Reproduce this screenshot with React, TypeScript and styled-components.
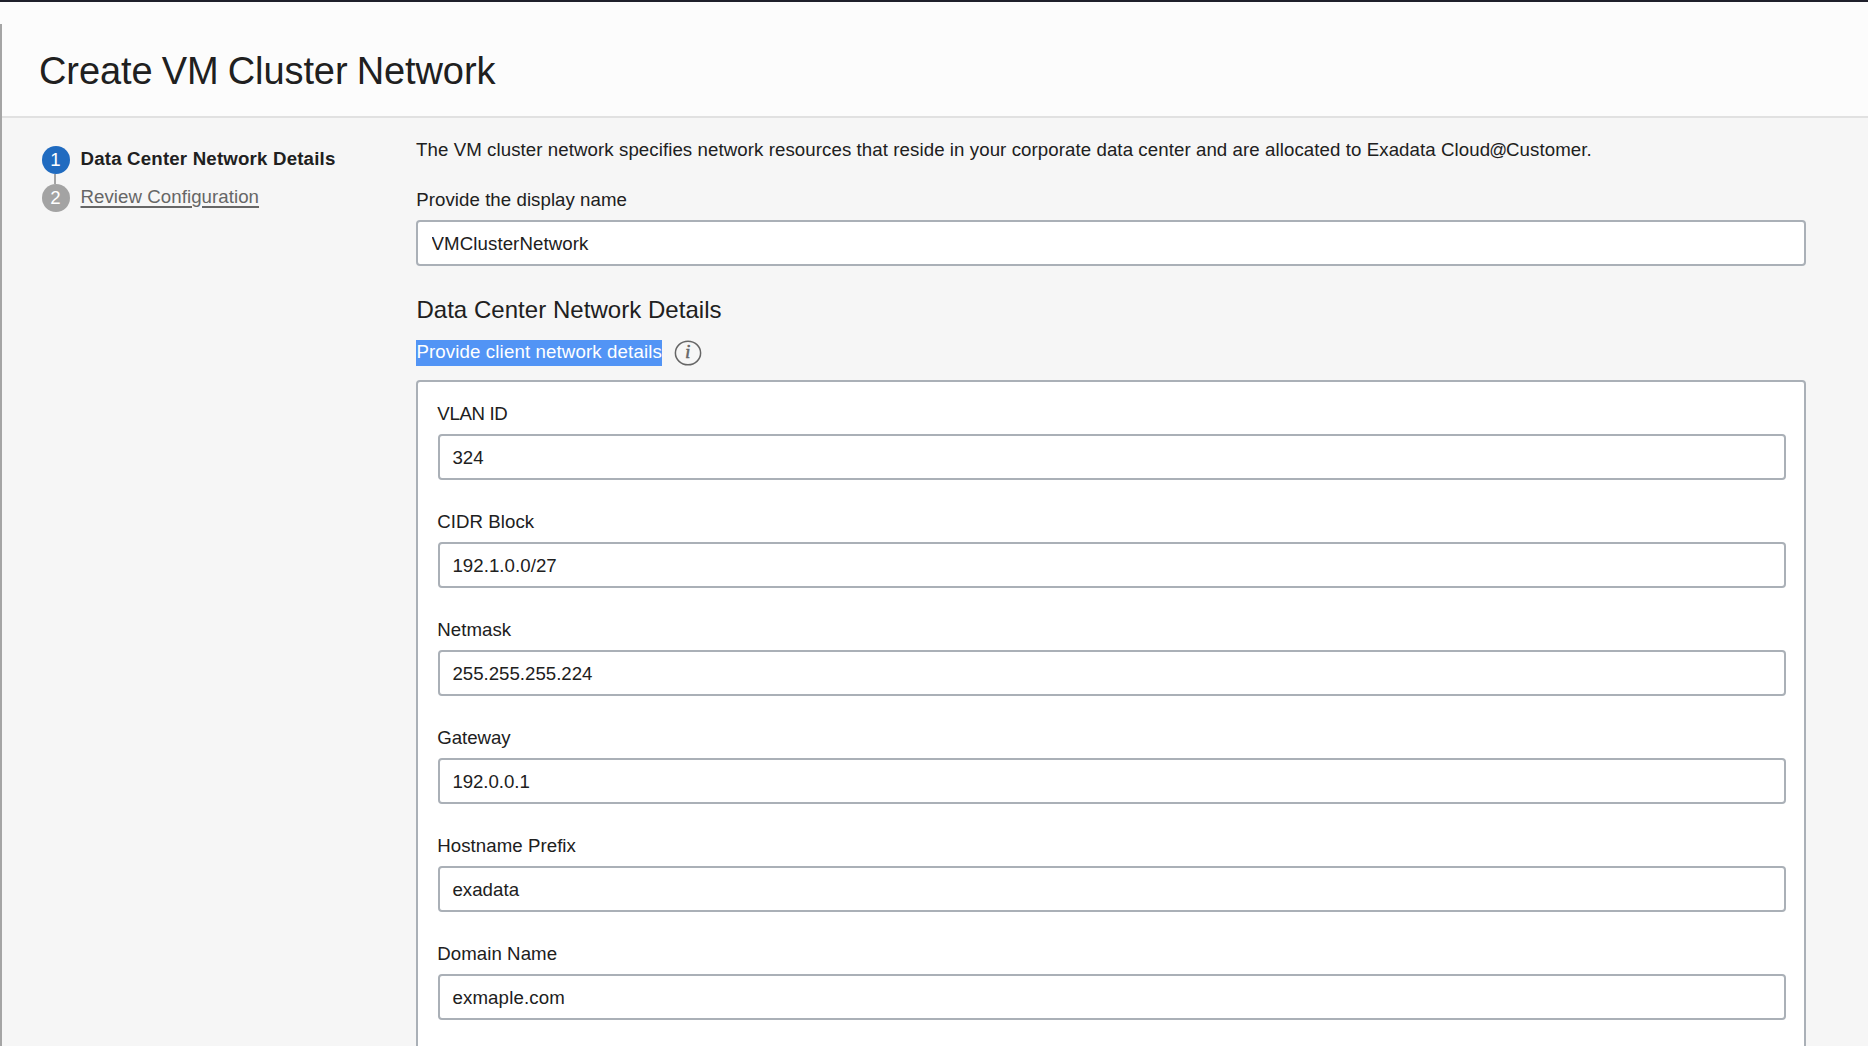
import React from 'react';
import styled, { createGlobalStyle } from 'styled-components';

const GlobalStyle = createGlobalStyle`
  * { box-sizing: border-box; }
  body {
    margin: 0;
    background: #f6f6f6;
    color: #202020;
    font: 18.67px/24px "Liberation Sans", Arial, sans-serif;
  }
`;

const Page = styled.div`
  height: 1046px;
  overflow: hidden;
  display: flex;
  flex-direction: column;
`;

const TopBar = styled.div`
  flex: none;
  height: 2px;
  background: #1f202b;
`;

const TopGap = styled.div`
  flex: none;
  height: 22px;
  background: #fcfcfc;
`;

const Dialog = styled.div`
  flex: 1;
  min-height: 0;
  display: flex;
  flex-direction: column;
  border-left: 2px solid #a5a5a5;
`;

const Header = styled.header`
  flex: none;
  height: 94px;
  padding: 24px 0 0 37px;
  background: #fcfcfc;
  border-bottom: 2px solid #e1e1e1;
`;

const Title = styled.h1`
  margin: 0;
  font-size: 38px;
  line-height: 46px;
  font-weight: 400;
  letter-spacing: -0.1px;
  word-spacing: -1.2px;
`;

const Body = styled.div`
  flex: 1;
  min-height: 0;
  display: flex;
`;

const Steps = styled.nav`
  flex: none;
  width: 414px;
  padding: 28px 0 0 40px;
`;

const Connector = styled.div`
  width: 2px;
  height: 10px;
  margin-left: 12px;
  background: #a3a3a3;
`;

const Step = styled.div`
  display: flex;
  gap: 10.5px;
  height: 28px;
`;

const StepNumber = styled.span<{ $active?: boolean }>`
  width: 28px;
  height: 28px;
  border-radius: 50%;
  background: ${(p) => (p.$active ? '#206bc0' : '#a3a3a3')};
  color: #fff;
  line-height: 27px;
  text-align: center;
  padding-right: 1px;
`;

const StepLabel = styled.span<{ $active?: boolean }>`
  line-height: 24px;
  font-weight: ${(p) => (p.$active ? 700 : 400)};
  letter-spacing: ${(p) => (p.$active ? '0.19px' : '0.06px')};
  color: ${(p) => (p.$active ? '#202020' : '#666')};
  text-decoration: ${(p) => (p.$active ? 'none' : 'underline')};
  text-decoration-thickness: 2px;
  text-underline-offset: 3px;
  margin-top: 1px;
`;

const Content = styled.main`
  width: 1390px;
  padding-top: 20px;
`;

const Intro = styled.p`
  margin: 0 0 26px;
  white-space: nowrap;
  letter-spacing: 0.08px;
`;

const AtSign = styled.span`
  font-size: 17.6px;
  line-height: 1;
  letter-spacing: -1px;
  margin-left: -1px;
`;

const Label = styled.label<{ $spacing?: number }>`
  display: block;
  margin-bottom: 8px;
  padding-left: 0.3px;
  letter-spacing: ${(p) => p.$spacing ?? 0.05}px;
`;

const Input = styled.input<{ $nested?: boolean; $spacing?: number }>`
  display: block;
  width: ${(p) => (p.$nested ? 'calc(100% - 1px)' : '100%')};
  height: 46px;
  margin: 0 0 0 ${(p) => (p.$nested ? 1 : 0)}px;
  padding: 2px ${(p) => (p.$nested ? 12.4 : 13.6)}px 0;
  border: 2px solid #aab0b7;
  border-radius: 4px;
  background: #fff;
  color: #202020;
  font: inherit;
  letter-spacing: ${(p) => p.$spacing ?? 0}px;
  outline: none;
`;

const SectionTitle = styled.h2`
  margin: 29px 0 15px;
  padding-left: 0.4px;
  font-size: 24px;
  line-height: 30px;
  font-weight: 400;
  letter-spacing: 0.04px;
`;

const Subheading = styled.div`
  display: flex;
  gap: 12px;
  height: 26px;
  margin-bottom: 14px;
`;

const Highlight = styled.span`
  width: 246px;
  height: 26px;
  padding-left: 0.4px;
  background: #5294f5;
  color: #fff;
  white-space: nowrap;
  letter-spacing: 0.13px;
`;

const Panel = styled.section`
  height: 800px;
  padding: 20px 18px 0 19px;
  border: 2px solid #aab0b7;
  border-radius: 4px;
  background: #fff;
`;

const Field = styled.div`
  margin-bottom: 30px;
`;

const InfoIcon = () => (
  <svg width="28" height="26" viewBox="0 0 28 26">
    <ellipse cx="14" cy="13" rx="12.6" ry="11.8" fill="none" stroke="#666" strokeWidth="1.5" />
    <text x="13.8" y="18.1" textAnchor="middle" fill="#666" stroke="#666" strokeWidth="0.6" fontFamily="Liberation Serif, serif" fontSize="18" fontStyle="italic">
      i
    </text>
  </svg>
);

const fields = [
  { label: 'VLAN ID', value: '324', labelSpacing: -0.35 },
  { label: 'CIDR Block', value: '192.1.0.0/27', valueSpacing: 0.05 },
  { label: 'Netmask', value: '255.255.255.224' },
  { label: 'Gateway', value: '192.0.0.1', labelSpacing: -0.05, valueSpacing: -0.05 },
  { label: 'Hostname Prefix', value: 'exadata', valueSpacing: 0.05 },
  { label: 'Domain Name', value: 'exmaple.com', valueSpacing: 0.15 },
];

export default function App() {
  return (
    <Page>
      <GlobalStyle />
      <TopBar />
      <TopGap />
      <Dialog>
        <Header>
          <Title>Create VM Cluster Network</Title>
        </Header>
        <Body>
          <Steps>
            <Step>
              <StepNumber $active>1</StepNumber>
              <StepLabel $active>Data Center Network Details</StepLabel>
            </Step>
            <Connector />
            <Step>
              <StepNumber>2</StepNumber>
              <StepLabel>Review Configuration</StepLabel>
            </Step>
          </Steps>
          <Content>
            <Intro>
              The VM cluster network specifies network resources that reside in your corporate data center and are
              allocated to Exadata Cloud<AtSign>@</AtSign>Customer.
            </Intro>
            <Label>Provide the display name</Label>
            <Input $spacing={0.08} defaultValue="VMClusterNetwork" />
            <SectionTitle>Data Center Network Details</SectionTitle>
            <Subheading>
              <Highlight>Provide client network details</Highlight>
              <InfoIcon />
            </Subheading>
            <Panel>
              {fields.map((f) => (
                <Field key={f.label}>
                  <Label $spacing={f.labelSpacing}>{f.label}</Label>
                  <Input $nested $spacing={f.valueSpacing} defaultValue={f.value} />
                </Field>
              ))}
            </Panel>
          </Content>
        </Body>
      </Dialog>
    </Page>
  );
}
